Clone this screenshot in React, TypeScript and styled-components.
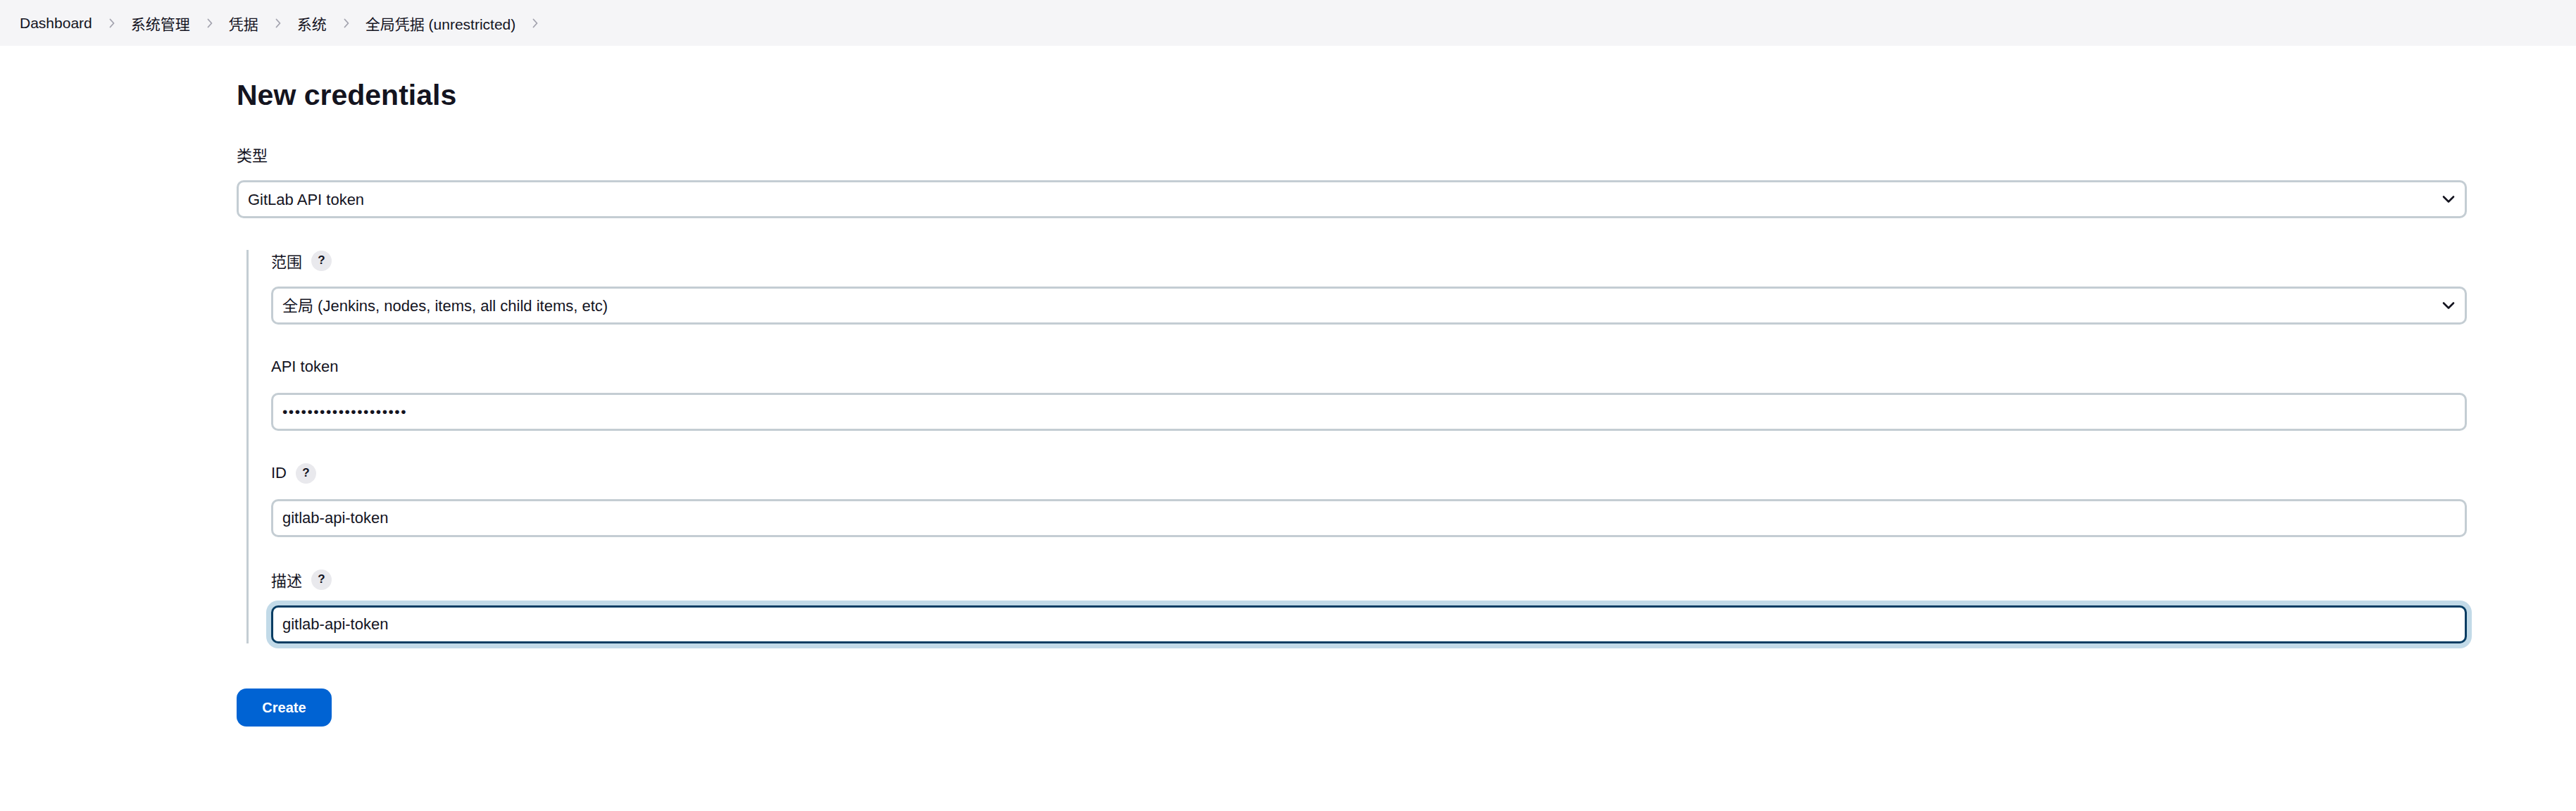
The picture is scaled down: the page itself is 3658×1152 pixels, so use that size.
import { FunctionComponent, ReactNode } from "react";
import styled, { createGlobalStyle } from "styled-components";

const GlobalStyle = createGlobalStyle`
  body {
    margin: 0;
    background: #fff;
    color: #14141f;
    font-family: "Liberation Sans", "Noto Sans CJK SC", sans-serif;
  }
`;

const Breadcrumbs = styled.nav`
  display: flex;
  align-items: center;
  height: 65px;
  padding: 0 28px;
  background: #f5f5f7;
  font-size: 21px;
`;

const Crumb = styled.span`
  color: #14141f;
  white-space: nowrap;
`;

const Separator = styled.svg`
  width: 8px;
  height: 14px;
  margin: 0 23px 0 24px;
  flex-shrink: 0;
`;

const Main = styled.main`
  padding: 46px 155px 40px 336px;
`;

const Title = styled.h1`
  margin: 0 0 45px;
  font-size: 41px;
  line-height: 48px;
  font-weight: 700;
  color: #14141f;
`;

const Field = styled.div<{ $last?: boolean }>`
  display: flex;
  flex-direction: column;
  margin-bottom: ${(p) => (p.$last ? "0" : "45px")};
`;

const LabelRow = styled.label`
  display: flex;
  align-items: center;
  gap: 13px;
  height: 30px;
  margin-bottom: 22px;
  font-size: 22px;
`;

const HelpBadge = styled.span`
  display: inline-flex;
  align-items: center;
  justify-content: center;
  width: 29px;
  height: 29px;
  border-radius: 50%;
  background: #e9e9ed;
  color: #14141f;
  font-size: 17px;
  font-weight: 700;
`;

const Nested = styled.div`
  margin-left: 14px;
  padding-left: 32px;
  border-left: 3px solid #c4cdd3;
`;

const SelectWrap = styled.div`
  position: relative;
`;

const Select = styled.select`
  appearance: none;
  width: 100%;
  height: 54px;
  box-sizing: border-box;
  padding: 0 60px 0 13px;
  border: 3px solid #c4cdd3;
  border-radius: 10px;
  background: #fff;
  color: #14141f;
  font-family: inherit;
  font-size: 22px;
  outline: none;
`;

const Chevron = styled.svg`
  position: absolute;
  right: 17px;
  top: 50%;
  width: 18px;
  height: 11px;
  transform: translateY(-50%);
  pointer-events: none;
`;

const TextInput = styled.input<{ $focused?: boolean }>`
  width: 100%;
  height: 54px;
  box-sizing: border-box;
  padding: 0 13px;
  border: 3px solid ${(p) => (p.$focused ? "#073d63" : "#c4cdd3")};
  border-radius: 10px;
  background: #fff;
  color: #14141f;
  font-family: inherit;
  font-size: 22px;
  outline: none;
  box-shadow: ${(p) => (p.$focused ? "0 0 0 7px #c2dae8" : "none")};
  &[type="password"] {
    font-size: 21px;
    letter-spacing: 1.5px;
  }
`;

const CreateButton = styled.button`
  margin-top: 64px;
  width: 135px;
  height: 54px;
  border: none;
  border-radius: 14px;
  background: #0063d3;
  color: #fff;
  font-family: inherit;
  font-size: 20px;
  font-weight: 700;
  cursor: pointer;
`;

const crumbs = ["Dashboard", "系统管理", "凭据", "系统", "全局凭据 (unrestricted)"];

const FormField: FunctionComponent<{
  label: string;
  help?: boolean;
  last?: boolean;
  children: ReactNode;
}> = ({ label, help, last, children }) => (
  <Field $last={last}>
    <LabelRow>
      {label}
      {help && <HelpBadge>?</HelpBadge>}
    </LabelRow>
    {children}
  </Field>
);

const DropDown: FunctionComponent<{ value: string }> = ({ value }) => (
  <SelectWrap>
    <Select value={value} onChange={() => {}}>
      <option value={value}>{value}</option>
    </Select>
    <Chevron viewBox="0 0 18 11" fill="none">
      <path d="M2 2l7 7 7-7" stroke="#14141f" strokeWidth="2.6" strokeLinecap="round" strokeLinejoin="round" />
    </Chevron>
  </SelectWrap>
);

const App: FunctionComponent = () => (
  <>
    <GlobalStyle />
    <Breadcrumbs>
      {crumbs.map((c) => (
        <span key={c} style={{ display: "contents" }}>
          <Crumb>{c}</Crumb>
          <Separator viewBox="0 0 8 14" fill="none">
            <path d="M1.5 1.5L6.5 7l-5 5.5" stroke="#a3a3ae" strokeWidth="1.8" strokeLinecap="round" strokeLinejoin="round" />
          </Separator>
        </span>
      ))}
    </Breadcrumbs>
    <Main>
      <Title>New credentials</Title>
      <FormField label="类型">
        <DropDown value="GitLab API token" />
      </FormField>
      <Nested>
        <FormField label="范围" help>
          <DropDown value="全局 (Jenkins, nodes, items, all child items, etc)" />
        </FormField>
        <FormField label="API token">
          <TextInput type="password" readOnly value="abcdefghijklmnopqrst" />
        </FormField>
        <FormField label="ID" help>
          <TextInput readOnly value="gitlab-api-token" />
        </FormField>
        <FormField label="描述" help last>
          <TextInput $focused readOnly value="gitlab-api-token" />
        </FormField>
      </Nested>
      <CreateButton>Create</CreateButton>
    </Main>
  </>
);

export default App;
